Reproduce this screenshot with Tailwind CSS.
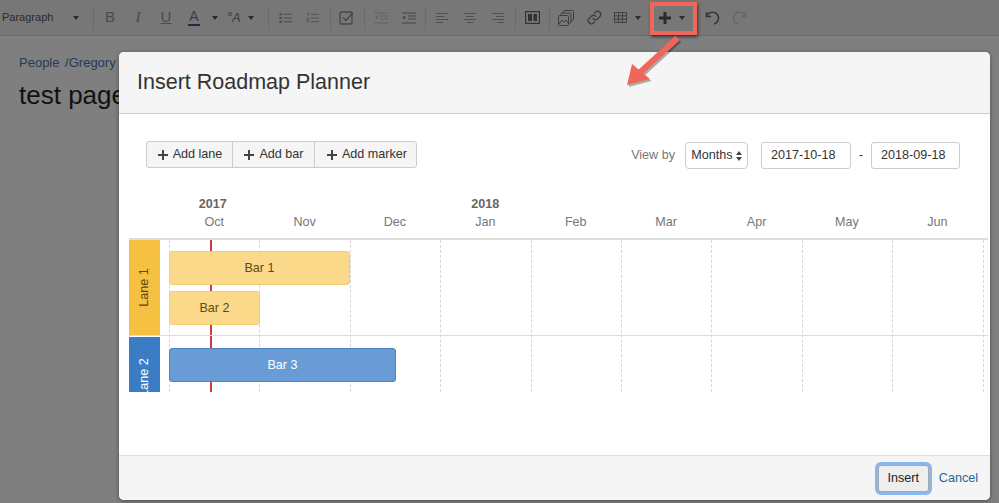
<!DOCTYPE html>
<html lang="en">
<head>
<meta charset="UTF-8">
<title>Insert Roadmap Planner</title>
<script src="https://cdn.jsdelivr.net/npm/@tailwindcss/browser@4"></script>
</head>
<body class="font-['Liberation_Sans',Arial,sans-serif] bg-[#7f7f7f] overflow-hidden">
<div class="relative w-[999px] h-[503px] overflow-hidden bg-[#7f7f7f]">

  <!-- editor toolbar -->
  <div class="flex items-center h-[36px] bg-[#777777] border-b border-[#6b6b6b] text-[#3a3a3a]">
    <div class="w-[93px] flex items-center pl-[2px] text-[11px] text-[#2b2b2b]">Paragraph<span class="ml-[20px] w-0 h-0 border-x-[3.5px] border-x-transparent border-t-[4px] border-t-[#2b2b2b]"></span></div>
    <div class="w-px h-[24px] bg-[#6a6a6a] mr-[2px]"></div>
    <div class="w-[28px] text-center text-[15px] text-[#4a4a4a]">B</div>
    <div class="w-[28px] text-center text-[15px] italic text-[#4a4a4a] font-['Liberation_Serif',serif]">I</div>
    <div class="w-[28px] text-center text-[15px] underline text-[#4a4a4a]">U</div>
    <div class="w-[28px] flex justify-center"><span class="text-[14px] leading-[15px] text-[#3d3d3d] border-b-2 border-[#1f2a44] px-[1px]">A</span></div>
    <div class="w-[14px] flex justify-center"><span class="w-0 h-0 border-x-[3px] border-x-transparent border-t-[4px] border-t-[#2b2b2b]"></span></div>
    <div class="w-[24px] text-center text-[13px] italic text-[#3d3d3d]"><span class="text-[8px] not-italic align-top">a</span>A</div>
    <div class="w-[9px] flex justify-center"><span class="w-0 h-0 border-x-[3px] border-x-transparent border-t-[4px] border-t-[#2b2b2b]"></span></div>
    <div class="w-px h-[24px] bg-[#6a6a6a] ml-[13px] mr-[2px]"></div>

    <div class="w-[28px] flex justify-center"><svg width="13" height="12" viewBox="0 0 14 12" fill="none" stroke="#4a4a4a"><path d="M5 2h9M5 6h9M5 10h9"/><path d="M0.5 2h2.500M0.5 6h2.500M0.5 10h2.500" stroke-width="2.200"/></svg></div>
    <div class="w-[27px] flex justify-center"><svg width="13" height="12" viewBox="0 0 14 12" fill="none" stroke="#505050"><path d="M5 2h9M5 6h9M5 10h9"/><path d="M1 1h1.500v3M0.5 6.500h2.500v1.500h-2v2h2.500" stroke-width=".9"/></svg></div>
    <div class="w-px h-[24px] bg-[#6a6a6a] ml-[4px] mr-[1px]"></div>
    <div class="w-[28px] flex justify-center"><svg width="15" height="15" viewBox="0 0 15 15" fill="none" stroke="#484848" stroke-width="1.300"><rect x="1" y="2" width="12" height="12" rx="1.500"/><path d="M4 7.500l3 3L14 2.500" stroke-width="1.500"/></svg></div>
    <div class="w-px h-[24px] bg-[#6a6a6a] ml-[4px] mr-[2px]"></div>

    <div class="w-[28px] flex justify-center"><svg width="14" height="12" viewBox="0 0 14 12" fill="none" stroke="#626262"><path d="M0 1h14M6 4h8M6 7h8M0 11h14"/><path d="M4 3.500L1 5.500l3 2z" fill="#626262" stroke="none"/></svg></div>
    <div class="w-[27px] flex justify-center"><svg width="14" height="12" viewBox="0 0 14 12" fill="none" stroke="#464646"><path d="M0 1h14M6 4h8M6 7h8M0 11h14"/><path d="M1 3.500l3 2-3 2z" fill="#464646" stroke="none"/></svg></div>
    <div class="w-px h-[24px] bg-[#6a6a6a] ml-[3px] mr-[2px]"></div>

    <div class="w-[28px] flex justify-center"><svg width="12" height="10" viewBox="0 0 12 10" stroke="#505050"><path d="M0 .5h12M0 3.500h8M0 6.500h12M0 9.500h7"/></svg></div>
    <div class="w-[28px] flex justify-center"><svg width="12" height="10" viewBox="0 0 12 10" stroke="#505050"><path d="M0 .5h12M2 3.500h8M0 6.500h12M3 9.500h6"/></svg></div>
    <div class="w-[28px] flex justify-center"><svg width="12" height="10" viewBox="0 0 12 10" stroke="#505050"><path d="M0 .5h12M4 3.500h8M0 6.500h12M5 9.500h7"/></svg></div>
    <div class="w-px h-[24px] bg-[#6a6a6a] ml-[3px] mr-[2px]"></div>

    <div class="w-[28px] flex justify-center"><svg width="15" height="13" viewBox="0 0 15 13"><rect x=".6" y=".6" width="13.800" height="11.800" fill="none" stroke="#333" stroke-width="1.200"/><rect x="3" y="3" width="4" height="7" fill="#333"/><rect x="8.500" y="3" width="3.500" height="7" fill="#333"/></svg></div>
    <div class="w-px h-[24px] bg-[#6a6a6a] ml-[3px] mr-[2px]"></div>

    <div class="w-[28px] flex justify-center"><svg width="16" height="16" viewBox="0 0 16 16" fill="none" stroke="#3f3f3f"><rect x="5.500" y=".5" width="10" height="10" rx="1"/><rect x="3" y="3" width="10" height="10" rx="1" fill="#777"/><rect x=".5" y="5.500" width="10" height="10" rx="1" fill="#777"/><path d="M1 14l3-4 2 2 2-2 2 3"/></svg></div>
    <div class="w-[28px] flex justify-center"><svg width="15" height="15" viewBox="0 0 24 24" fill="none" stroke="#3f3f3f" stroke-width="2.200" stroke-linecap="round"><path d="M10 14a5 5 0 0 0 7 0l4-4a5 5 0 0 0-7-7l-2 2"/><path d="M14 10a5 5 0 0 0-7 0l-4 4a5 5 0 0 0 7 7l2-2"/></svg></div>
    <div class="w-[24px] flex justify-center"><svg width="13" height="11" viewBox="0 0 13 11" fill="none" stroke="#3f3f3f"><path d="M.5.5h12v10H.5zM.5 3.800h12M.5 7.200h12M4.500.5v10M8.500.5v10"/></svg></div>
    <div class="w-[12px] flex justify-center"><span class="w-0 h-0 border-x-[3px] border-x-transparent border-t-[4px] border-t-[#2b2b2b]"></span></div>

    <div class="w-[21px] ml-[10px] flex justify-center"><svg width="12" height="12" viewBox="0 0 12 12" fill="#2a2a2a"><path d="M4.500 0h3v4.500H12v3H7.500V12h-3V7.500H0v-3h4.500z"/></svg></div>
    <div class="w-[14px] flex justify-center"><span class="w-0 h-0 border-x-[3.500px] border-x-transparent border-t-[4px] border-t-[#2a2a2a]"></span></div>
    <div class="w-[28px] ml-[9px] flex justify-center"><svg width="15" height="14" viewBox="0 0 15 14" fill="none" stroke="#333" stroke-width="1.400"><path d="M1.500 1v4.500H6"/><path d="M1.800 5.300A6 6 0 1 1 9 13"/></svg></div>
    <div class="w-[27px] flex justify-center"><svg width="15" height="14" viewBox="0 0 15 14" fill="none" stroke="#666" stroke-width="1.400"><path d="M13.500 1v4.500H9"/><path d="M13.200 5.300A6 6 0 1 0 6 13"/></svg></div>
  </div>

  <!-- page behind the dialog -->
  <div class="pl-[19px] pt-[18px]">
    <div class="text-[13px] leading-[17px] text-[#263a55] whitespace-nowrap">People <span class="text-[#333] ml-[2px]">/</span>Gregory Wilson</div>
    <h1 class="mt-[8px] text-[26px] leading-[32px] text-[#111]">test page</h1>
  </div>

  <!-- dialog -->
  <div class="absolute left-[119px] top-[52px] w-[871px] h-[448px] flex flex-col bg-white rounded-[5px] overflow-hidden shadow-[0_1px_4px_rgba(0,0,0,0.4)]">
    <div class="h-[62px] shrink-0 flex items-center pl-[18px] bg-[#f5f5f5] border-b border-[#cccccc] text-[21.500px] text-[#333333]">Insert Roadmap Planner</div>

    <div class="flex-1 flex flex-col min-h-0 text-[12.600px]">
      <!-- controls -->
      <div class="flex items-start justify-between pl-[27px] pr-[30px] pt-[27px] h-[55px]">
        <div class="flex h-[27px] text-[#333] bg-[#f5f5f5] border border-[#cccccc] rounded-[3px]">
          <div class="w-[86px] pl-[1px] flex items-center justify-center gap-[5px] border-r border-[#cccccc]"><svg width="10" height="10" viewBox="0 0 10 10" fill="#444"><path d="M4 0h2v4h4v2H6v4H4V6H0V4h4z"/></svg>Add lane</div>
          <div class="w-[82px] pl-[1px] flex items-center justify-center gap-[5px] border-r border-[#cccccc]"><svg width="10" height="10" viewBox="0 0 10 10" fill="#444"><path d="M4 0h2v4h4v2H6v4H4V6H0V4h4z"/></svg>Add bar</div>
          <div class="w-[101px] pl-[3px] flex items-center justify-center gap-[5px]"><svg width="10" height="10" viewBox="0 0 10 10" fill="#444"><path d="M4 0h2v4h4v2H6v4H4V6H0V4h4z"/></svg>Add marker</div>
        </div>
        <div class="flex items-center h-[27px] mt-[1px] text-[#333]">
          <span class="text-[#777] mr-[10px]">View by</span>
          <div class="w-[63px] h-[27px] flex items-center justify-center gap-[3px] border border-[#cccccc] rounded-[4px]">Months<svg width="6" height="10" viewBox="0 0 6 10" fill="#444"><path d="M3 0l3 4H0zM3 10L0 6h6z"/></svg></div>
          <div class="w-[90px] h-[27px] ml-[13px] pl-[9px] flex items-center border border-[#cccccc] rounded-[3px]">2017-10-18</div>
          <span class="w-[20px] text-center">-</span>
          <div class="w-[89px] h-[27px] pl-[9px] flex items-center border border-[#cccccc] rounded-[3px]">2018-09-18</div>
        </div>
      </div>

      <!-- roadmap -->
      <div class="ml-[10px] mt-[14px] w-[859px] relative">
        <div class="flex h-[57px] pl-[40px] border-b-2 border-[#dddddd] text-[#777]">
          <div class="w-[90.400px] text-center pt-[12px] leading-[18px]"><b class="block text-[#666] leading-[18px] -ml-[3px]">2017</b>Oct</div>
          <div class="w-[90.400px] text-center pt-[30px] leading-[18px]">Nov</div>
          <div class="w-[90.400px] text-center pt-[30px] leading-[18px]">Dec</div>
          <div class="w-[90.400px] text-center pt-[12px] leading-[18px]"><b class="block text-[#666] leading-[18px]">2018</b>Jan</div>
          <div class="w-[90.400px] text-center pt-[30px] leading-[18px]">Feb</div>
          <div class="w-[90.400px] text-center pt-[30px] leading-[18px]">Mar</div>
          <div class="w-[90.400px] text-center pt-[30px] leading-[18px]">Apr</div>
          <div class="w-[90.400px] text-center pt-[30px] leading-[18px]">May</div>
          <div class="w-[90.400px] text-center pt-[30px] leading-[18px]">Jun</div>
        </div>

        <div class="relative">
          <!-- dashed month lines -->
          <div class="absolute left-[40px] top-0 bottom-0 flex border-l border-dashed border-[#d6d6d6]">
            <div class="w-[90.400px] border-r border-dashed border-[#d6d6d6]"></div>
            <div class="w-[90.400px] border-r border-dashed border-[#d6d6d6]"></div>
            <div class="w-[90.400px] border-r border-dashed border-[#d6d6d6]"></div>
            <div class="w-[90.400px] border-r border-dashed border-[#d6d6d6]"></div>
            <div class="w-[90.400px] border-r border-dashed border-[#d6d6d6]"></div>
            <div class="w-[90.400px] border-r border-dashed border-[#d6d6d6]"></div>
            <div class="w-[90.400px] border-r border-dashed border-[#d6d6d6]"></div>
            <div class="w-[90.400px] border-r border-dashed border-[#d6d6d6]"></div>
            <div class="w-[90.400px] border-r border-dashed border-[#d6d6d6]"></div>
          </div>
          <!-- today marker -->
          <div class="absolute left-[81px] top-0 bottom-0 w-[2px] bg-[#d0393e]"></div>

          <!-- lane 1 -->
          <div class="relative flex h-[96px] border-b border-[#dddddd]">
            <div class="w-[31px] h-[95px] bg-[#f6c042] flex items-center justify-center"><span class="-rotate-90 whitespace-nowrap text-[#5e4a12]">Lane 1</span></div>
            <div class="absolute left-[40px] top-[11px] w-[181px] h-[34px] pt-[1px] flex items-center justify-center bg-[#fbd98a] border border-[#f3cc72] rounded-[3px] text-[#5e4a12]">Bar 1</div>
            <div class="absolute left-[40px] top-[51px] w-[91px] h-[34px] pt-[1px] flex items-center justify-center bg-[#fbd98a] border border-[#f3cc72] rounded-[3px] text-[#5e4a12]">Bar 2</div>
          </div>
          <!-- lane 2, clipped by the viewport of the roadmap -->
          <div class="relative flex h-[56px] pt-[1px] overflow-hidden">
            <div class="w-[31px] h-[55px] bg-[#3b7dc4] overflow-hidden">
              <div class="h-[81px] flex items-center justify-center"><span class="-rotate-90 whitespace-nowrap text-white">Lane 2</span></div>
            </div>
            <div class="absolute left-[40px] top-[12px] w-[227px] h-[34px] pt-[1px] flex items-center justify-center bg-[#699cd6] border border-[#4d83bf] rounded-[3px] text-white">Bar 3</div>
          </div>
        </div>
      </div>
    </div>

    <div class="h-[45px] shrink-0 flex items-center justify-end pr-[12px] gap-[10px] bg-[#f5f5f5] border-t border-[#dddddd] text-[12.600px]">
      <div class="w-[51px] h-[27px] flex items-center justify-center bg-[#eeeeee] border border-[#a8a8a8] rounded-[3px] text-[#222] shadow-[0_0_0_3px_#8ab8ee]">Insert</div>
      <span class="text-[#2a6496]">Cancel</span>
    </div>
  </div>

  <!-- annotation around the insert menu -->
  <div class="absolute left-[650px] top-[2px] w-[47px] h-[33px] border-[4px] border-[#f0665a] shadow-[1px_2px_3px_rgba(0,0,0,0.55)]"></div>
  <svg class="absolute left-[620px] top-[30px]" width="70" height="64" viewBox="0 0 70 64">
    <path d="M55.200 6.100L59.800 9.900L23.300 43.400L30 49L7 55L12 34L18.700 39.600Z" transform="translate(1.500,2)" fill="#000" fill-opacity=".3"/>
    <path d="M55.200 6.100L59.800 9.900L23.300 43.400L30 49L7 55L12 34L18.700 39.600Z" fill="#f0665a"/>
  </svg>
</div>
</body>
</html>
